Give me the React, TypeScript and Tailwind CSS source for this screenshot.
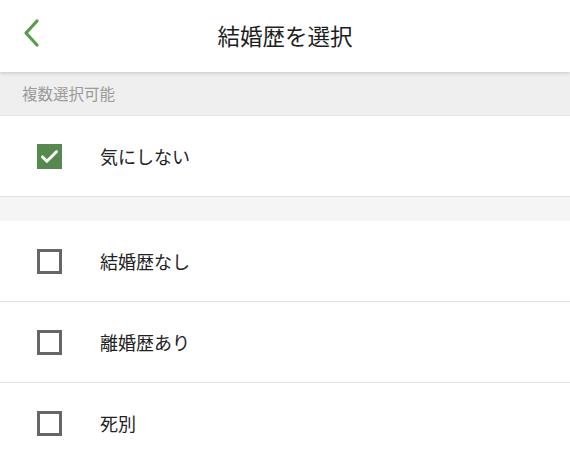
import React from "react";

const font = { fontFamily: '"Noto Sans CJK JP", "Noto Sans", sans-serif' };

function Box({ checked }: { checked: boolean }) {
  if (checked) {
    return (
      <div className="w-[25px] h-[25px] bg-[#558a4c] flex items-center justify-center">
        <svg width="21" height="21" viewBox="0 0 24 24" fill="none">
          <path d="M4 12.5l5 5L20 6.5" stroke="#ffffff" strokeWidth="3.4" strokeLinecap="round" strokeLinejoin="round" />
        </svg>
      </div>
    );
  }
  return <div className="w-[25px] h-[25px] border-[3px] border-[#666666] bg-white" />;
}

function Row({ label, checked = false, border = true }: { label: string; checked?: boolean; border?: boolean }) {
  return (
    <div className={`h-[81px] flex items-center bg-white ${border ? "border-b border-[#e2e2e2]" : ""}`}>
      <div className="w-[100px] pl-[37px] flex items-center">
        <Box checked={checked} />
      </div>
      <span className="text-[18px] text-[#222222]">{label}</span>
    </div>
  );
}

export default function App() {
  return (
    <div className="w-[570px] h-[460px] overflow-hidden bg-white" style={font}>
      <div className="relative z-10 h-[72px] bg-white flex items-center justify-center shadow-[0_1px_4px_rgba(0,0,0,0.18)]">
        <div className="absolute left-[21px] top-[18px]">
          <svg width="20" height="30" viewBox="0 0 20 30" fill="none">
            <path d="M16 3L5 15l11 12" stroke="#5a9a4e" strokeWidth="3.2" strokeLinecap="round" strokeLinejoin="round" />
          </svg>
        </div>
        <span className="text-[22.5px] text-[#1e1e1e]">結婚歴を選択</span>
      </div>
      <div className="h-[44px] bg-[#efefef] flex items-center pl-[22px] border-b border-[#e6e6e6]">
        <span className="text-[15.5px] text-[#9a9a9a]">複数選択可能</span>
      </div>
      <Row label="気にしない" checked />
      <div className="h-[24px] bg-[#f5f5f5]" />
      <Row label="結婚歴なし" />
      <Row label="離婚歴あり" />
      <Row label="死別" border={false} />
    </div>
  );
}
